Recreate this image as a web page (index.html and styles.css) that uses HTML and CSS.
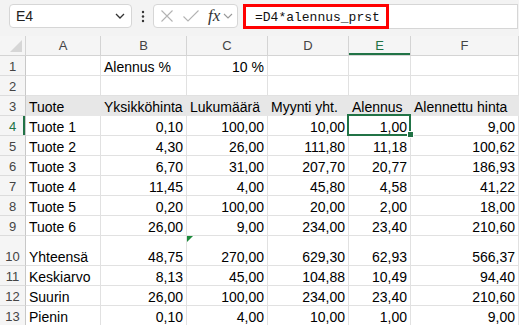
FILE: index.html
```html
<!DOCTYPE html>
<html lang="fi">

<head>
    <meta charset="UTF-8">
    <title>Alennus</title>
    <link rel="stylesheet" href="styles.css">
</head>

<body>
    <div class="toolbar">
        <div class="namebox">
            <span>E4</span>
            <svg width="10" height="6" viewBox="0 0 10 6"><path d="M1 1 L5 5 L9 1" fill="none" stroke="#333" stroke-width="1.3"/></svg>
        </div>
        <svg class="dots" width="4" height="13" viewBox="0 0 4 13">
            <circle cx="2" cy="2" r="1.2" fill="#333"/>
            <circle cx="2" cy="6.5" r="1.2" fill="#333"/>
            <circle cx="2" cy="11" r="1.2" fill="#333"/>
        </svg>
        <div class="fxbox">
            <svg width="12" height="12" viewBox="0 0 12 12"><path d="M0.5 0.5 L11.5 11.5 M11.5 0.5 L0.5 11.5" stroke="#b3b3b3" stroke-width="1.1"/></svg>
            <svg width="16" height="12" viewBox="0 0 16 12"><path d="M0.5 6.5 L5 11 L15.5 0.5" fill="none" stroke="#b3b3b3" stroke-width="1.1"/></svg>
            <span class="fx">fx</span>
            <svg width="10" height="6" viewBox="0 0 10 6"><path d="M1 1 L5 5 L9 1" fill="none" stroke="#999" stroke-width="1.1"/></svg>
        </div>
        <div class="formula">
            <span class="formula-text">=D4*alennus_prst</span>
        </div>
    </div>

    <div class="sheet">
        <div class="c corner"></div>
        <div class="c ch">A</div>
        <div class="c ch">B</div>
        <div class="c ch">C</div>
        <div class="c ch">D</div>
        <div class="c ch active">E</div>
        <div class="c ch">F</div>

        <div class="c rh">1</div>
        <div class="c"></div>
        <div class="c">Alennus %</div>
        <div class="c num">10 %</div>
        <div class="c"></div>
        <div class="c"></div>
        <div class="c"></div>

        <div class="c rh">2</div>
        <div class="c"></div>
        <div class="c"></div>
        <div class="c"></div>
        <div class="c"></div>
        <div class="c"></div>
        <div class="c"></div>

        <div class="c rh">3</div>
        <div class="c head">Tuote</div>
        <div class="c head">Yksikköhinta</div>
        <div class="c head">Lukumäärä</div>
        <div class="c head">Myynti yht.</div>
        <div class="c head">Alennus</div>
        <div class="c head">Alennettu hinta</div>

        <div class="c rh active">4</div>
        <div class="c">Tuote 1</div>
        <div class="c num">0,10</div>
        <div class="c num">100,00</div>
        <div class="c num">10,00</div>
        <div class="c num sel">1,00</div>
        <div class="c num">9,00</div>

        <div class="c rh">5</div>
        <div class="c">Tuote 2</div>
        <div class="c num">4,30</div>
        <div class="c num">26,00</div>
        <div class="c num">111,80</div>
        <div class="c num">11,18</div>
        <div class="c num">100,62</div>

        <div class="c rh">6</div>
        <div class="c">Tuote 3</div>
        <div class="c num">6,70</div>
        <div class="c num">31,00</div>
        <div class="c num">207,70</div>
        <div class="c num">20,77</div>
        <div class="c num">186,93</div>

        <div class="c rh">7</div>
        <div class="c">Tuote 4</div>
        <div class="c num">11,45</div>
        <div class="c num">4,00</div>
        <div class="c num">45,80</div>
        <div class="c num">4,58</div>
        <div class="c num">41,22</div>

        <div class="c rh">8</div>
        <div class="c">Tuote 5</div>
        <div class="c num">0,20</div>
        <div class="c num">100,00</div>
        <div class="c num">20,00</div>
        <div class="c num">2,00</div>
        <div class="c num">18,00</div>

        <div class="c rh">9</div>
        <div class="c">Tuote 6</div>
        <div class="c num">26,00</div>
        <div class="c num">9,00</div>
        <div class="c num">234,00</div>
        <div class="c num">23,40</div>
        <div class="c num">210,60</div>

        <div class="c rh">10</div>
        <div class="c">Yhteensä</div>
        <div class="c num">48,75</div>
        <div class="c num warn">270,00</div>
        <div class="c num">629,30</div>
        <div class="c num">62,93</div>
        <div class="c num">566,37</div>

        <div class="c rh">11</div>
        <div class="c">Keskiarvo</div>
        <div class="c num">8,13</div>
        <div class="c num">45,00</div>
        <div class="c num">104,88</div>
        <div class="c num">10,49</div>
        <div class="c num">94,40</div>

        <div class="c rh">12</div>
        <div class="c">Suurin</div>
        <div class="c num">26,00</div>
        <div class="c num">100,00</div>
        <div class="c num">234,00</div>
        <div class="c num">23,40</div>
        <div class="c num">210,60</div>

        <div class="c rh">13</div>
        <div class="c">Pienin</div>
        <div class="c num">0,10</div>
        <div class="c num">4,00</div>
        <div class="c num">10,00</div>
        <div class="c num">1,00</div>
        <div class="c num">9,00</div>
    </div>
</body>

</html>
```

FILE: styles.css
```css
body {
    margin: 0;
    overflow: hidden;
    background: #fff;
    color: #000;
    font-family: "Liberation Sans", Arial, sans-serif;
}

/* barra de fórmulas */
.toolbar {
    display: flex;
    align-items: flex-start;
    height: 36px;
    box-sizing: border-box;
    padding: 4px 1px 0 9px;
    background: #f3f3f3;
}

.namebox {
    display: flex;
    align-items: center;
    justify-content: space-between;
    width: 123px;
    height: 24px;
    box-sizing: border-box;
    padding: 0 6px 0 6px;
    background: #fff;
    border: 1px solid #d6d6d6;
    border-radius: 4px;
    font-size: 14px;
    color: #222;
}

.dots {
    margin: 6px 8px 0 9px;
}

.fxbox {
    display: flex;
    align-items: center;
    width: 85px;
    height: 24px;
    box-sizing: border-box;
    padding: 0 0 0 7px;
    background: #fff;
    border: 1px solid #d6d6d6;
    border-radius: 4px;
}

.fxbox svg:nth-child(2) {
    margin-left: 10px;
}

.fx {
    margin-left: 9px;
    font-family: "Liberation Serif", serif;
    font-style: italic;
    font-size: 17px;
    color: #333;
    line-height: 20px;
}

.fxbox svg:last-child {
    margin-left: 3px;
}

.formula {
    flex: 1;
    display: flex;
    height: 25px;
    margin-left: 5px;
    box-sizing: border-box;
    background: #fff;
    border: 1px solid #d6d6d6;
}

.formula-text {
    display: flex;
    align-items: center;
    width: 146px;
    height: 25px;
    margin: -1px 0 0 -1px;
    box-sizing: border-box;
    padding: 1px 0 0 9px;
    border: 3px solid #f00;
    font-family: "Liberation Mono", monospace;
    font-size: 13px;
    color: #111;
}

/* planilha */
.sheet {
    display: grid;
    grid-template-columns: 26px 75px 86px 81px 81px 62px 1fr;
    grid-template-rows: repeat(10, 20px) 30px repeat(3, 20px);
}

.c {
    position: relative;
    display: flex;
    align-items: flex-end;
    box-sizing: border-box;
    padding: 0 3px;
    border-right: 1px solid #e1e1e1;
    border-bottom: 1px solid #e1e1e1;
    font-size: 14px;
    line-height: 16px;
    white-space: nowrap;
}

.num {
    justify-content: flex-end;
}

.ch,
.corner {
    justify-content: center;
    align-items: center;
    background: #f5f5f5;
    border-right-color: #d4d4d4;
    border-bottom-color: #d4d4d4;
    font-size: 13px;
    line-height: 19px;
    color: #444;
}

.corner::after {
    content: "";
    position: absolute;
    right: 3px;
    bottom: 3px;
    border-left: 12px solid transparent;
    border-bottom: 12px solid #d6d6d6;
}

.rh {
    justify-content: center;
    padding: 0;
    background: #f5f5f5;
    border-right-color: #c8c8c8;
    border-bottom-color: #dcdcdc;
    font-size: 13px;
    color: #444;
}

.ch.active {
    color: #217346;
    box-shadow: inset 0 -2px 0 #217346;
}

.rh.active {
    color: #217346;
    box-shadow: inset -2px 0 0 #217346;
}

.head {
    background: #e7e7e7;
    border-color: #e7e7e7;
}

.sel::after {
    content: "";
    position: absolute;
    left: -2px;
    top: -2px;
    right: -1px;
    bottom: -1px;
    border: 2px solid #217346;
}

.sel::before {
    content: "";
    position: absolute;
    right: -4px;
    bottom: -3px;
    width: 5px;
    height: 5px;
    background: #217346;
    border: 1px solid #fff;
    z-index: 1;
}

.warn::before {
    content: "";
    position: absolute;
    left: 0;
    top: 0;
    border-top: 6px solid #1b8a3a;
    border-right: 6px solid transparent;
}
```
